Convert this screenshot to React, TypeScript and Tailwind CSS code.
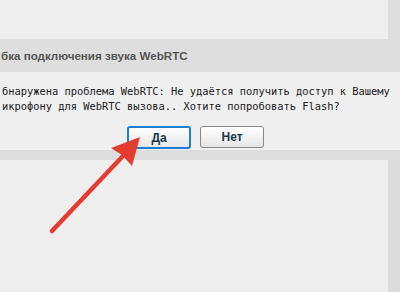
import React from 'react';

const DialogButton = ({ label, active }: { label: string; active?: boolean }) => (
  <button
    className={
      active
        ? 'w-[64px] h-[23px] rounded-[3px] border-2 border-[#1b7fd3] bg-gradient-to-b from-white to-[#e6e6e6] text-[12px] font-bold text-[#163a48]'
        : 'w-[64px] h-[22px] rounded-[3px] border border-[#8a8a8a] bg-gradient-to-b from-white to-[#e6e6e6] text-[12px] font-bold text-[#163a48]'
    }
    style={{ fontFamily: '"Liberation Sans", Arial, sans-serif' }}
  >
    {label}
  </button>
);

const Arrow = () => (
  <svg className="absolute left-0 top-0 pointer-events-none" width="400" height="292" viewBox="0 0 400 292">
    <line x1="52" y1="231" x2="122" y2="157" stroke="#e63b2f" strokeWidth="4.5" strokeLinecap="round" />
    <path d="M140 137 L111 148 L122 155 L132 166 Z" fill="#e63b2f" />
  </svg>
);

export default function App() {
  return (
    <div className="relative w-[400px] h-[292px] overflow-hidden flex flex-col bg-[#eeeeee]">
      <div className="h-[39px] flex">
        <div className="flex-1 bg-[#eeeeee]" />
        <div className="w-[12px] bg-[#dddddd]" />
      </div>

      <div
        className="h-[33px] bg-[#dedede] flex items-center pl-[1px] text-[11.6px] font-bold text-[#555555] whitespace-nowrap"
        style={{ fontFamily: '"Liberation Sans", Arial, sans-serif' }}
      >
        бка подключения звука WebRTC
      </div>

      <div className="h-[78px] bg-[#efefef] flex flex-col">
        <div
          className="pt-[12px] pl-[2px] text-[10.4px] leading-[15px] text-[#1a1a1a] whitespace-nowrap"
          style={{ fontFamily: '"DejaVu Sans Mono", "Liberation Mono", monospace' }}
        >
          <div>бнаружена проблема WebRTC: Не удаётся получить доступ к Вашему</div>
          <div>икрофону для WebRTC вызова.. Хотите попробовать Flash?</div>
        </div>
        <div className="flex items-start gap-[9px] pl-[127px] mt-[12px]">
          <DialogButton label="Да" active />
          <DialogButton label="Нет" />
        </div>
      </div>

      <div className="h-[10px] bg-[#dddddd]" />

      <div className="flex-1 flex">
        <div className="flex-1 bg-[#eeeeee]" />
        <div className="w-[12px] bg-[#dcdcdc]" />
      </div>

      <Arrow />
    </div>
  );
}
